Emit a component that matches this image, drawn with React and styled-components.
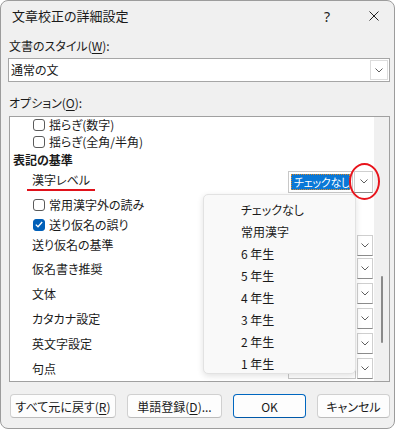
import styled, { createGlobalStyle } from 'styled-components';

const GlobalStyle = createGlobalStyle`
  html, body { margin: 0; padding: 0; background: #ffffff; }
  body {
    font-family: "Noto Sans CJK JP", "Noto Sans", sans-serif;
    font-feature-settings: "palt";
    color: #1a1a1a;
  }
`;

const Dialog = styled.div`
  width: 395px;
  height: 429px;
  box-sizing: border-box;
  border: 1px solid #9c9c9c;
  border-radius: 8px;
  background: #f0f0f0;
  display: flex;
  flex-direction: column;
  overflow: hidden;
`;

const TitleBar = styled.div`
  height: 30px;
  display: flex;
  align-items: center;
  padding-left: 11px;
`;

const Title = styled.div`
  flex: 1;
  font-size: 13px;
  line-height: 30px;
`;

const CaptionButton = styled.div`
  width: ${p => p.w}px;
  height: 30px;
  display: flex;
  align-items: center;
  justify-content: center;
  font-family: "Noto Sans", sans-serif;
  font-size: 14px;
  color: #222;
`;

const Body = styled.div`
  flex: 1;
  display: flex;
  flex-direction: column;
  padding: 0 4px 0 7px;
`;

const FieldLabel = styled.div`
  font-size: 12px;
  line-height: 16px;
  margin-top: ${p => p.mt}px;
  padding-left: 1px;
  u { text-underline-offset: 2px; }
`;

const MainCombo = styled.div`
  margin-top: 4px;
  height: 24px;
  box-sizing: border-box;
  border: 1px solid #a6a6a6;
  background: #fff;
  display: flex;
  align-items: stretch;
`;

const MainComboText = styled.div`
  flex: 1;
  font-size: 12px;
  line-height: 22px;
  padding-left: 2px;
`;

const MainComboButton = styled.div`
  width: 16px;
  margin: 1px;
  border: 1px solid #dcdcdc;
  display: flex;
  align-items: center;
  justify-content: center;
`;

const ListBox = styled.div`
  position: relative;
  margin-top: 5px;
  margin-left: 1px;
  height: 266px;
  box-sizing: border-box;
  border: 1px solid #a0a0a0;
  display: flex;
`;

const ListContent = styled.div`
  flex: 1;
  background: #fff;
  overflow: hidden;
`;

const Row = styled.div`
  height: ${p => p.h}px;
  display: flex;
  align-items: center;
  padding-left: ${p => p.indent}px;
  padding-right: 1px;
  font-size: 12px;
  line-height: 14px;
  font-weight: ${p => (p.bold ? 700 : 400)};
  white-space: nowrap;
`;

const Box = styled.span`
  width: 12px;
  height: 12px;
  box-sizing: border-box;
  border-radius: 3px;
  margin-right: 4px;
  flex: none;
  display: flex;
  align-items: center;
  justify-content: center;
  border: 1px solid ${p => (p.checked ? '#005fb8' : '#5a5a5a')};
  background: ${p => (p.checked ? '#005fb8' : '#fff')};
`;

const Marked = styled.span`
  padding: 0 5px 2px;
  margin-left: -5px;
  border-bottom: 2px solid #e0121b;
`;

const Combo = styled.div`
  margin-left: auto;
  width: 85px;
  height: ${p => p.h || 21}px;
  display: flex;
  align-items: stretch;
  gap: 1px;
`;

const ComboField = styled.div`
  flex: 1;
  box-sizing: border-box;
  border: 1px solid #c8c8c8;
  background: #fff;
  padding: 2px;
  display: flex;
`;

const Highlight = styled.div`
  flex: 1;
  background: #0a78d7;
  outline: 1px dotted #d8882c;
  outline-offset: -1px;
  color: #fff;
  font-size: 11px;
  line-height: 17px;
  padding-left: 3px;
  letter-spacing: -0.3px;
`;

const DropButton = styled.div`
  width: ${p => p.w}px;
  box-sizing: border-box;
  background: #fff;
  border: 1px solid #cfcfcf;
  border-bottom-color: #8c8c8c;
  display: flex;
  align-items: center;
  justify-content: center;
`;

const RedCircle = styled.div`
  position: absolute;
  left: 339px;
  top: 46px;
  width: 31px;
  height: 37px;
  box-sizing: border-box;
  border: 2px solid #e8141c;
  border-radius: 50%;
`;

const ScrollTrack = styled.div`
  width: 15px;
  background: #f0f0f0;
  display: flex;
  justify-content: center;
  padding-top: 159px;
`;

const Thumb = styled.div`
  width: 2px;
  height: 67px;
  border-radius: 1px;
  background: #8a8a8a;
`;

const Popup = styled.div`
  position: absolute;
  left: 193px;
  top: 77px;
  width: 153px;
  height: 180px;
  box-sizing: border-box;
  padding-top: 4px;
  background: #f9f9f9;
  border: 1px solid #e2e2e2;
  border-radius: 5px;
  box-shadow: 0 2px 6px rgba(0, 0, 0, 0.12);
`;

const PopupItem = styled.div`
  height: 22px;
  line-height: 22px;
  padding-left: 37px;
  font-size: 12px;
`;

const ButtonRow = styled.div`
  margin-top: 12px;
  margin-left: 2px;
  display: flex;
  gap: 11px;
`;

const Button = styled.div`
  width: ${p => p.w}px;
  height: 24px;
  box-sizing: border-box;
  border: 1px solid ${p => (p.primary ? '#0067c0' : '#d0d0d0')};
  border-bottom-color: ${p => (p.primary ? '#0058a8' : '#bcbcbc')};
  border-radius: 4px;
  background: #fdfdfd;
  font-size: 12px;
  display: flex;
  align-items: center;
  justify-content: center;
  u { text-underline-offset: 2px; }
`;

const Chevron = () => (
  <svg width="8" height="5" viewBox="0 0 8 5">
    <polyline points="0.5,0.5 4,4 7.5,0.5" fill="none" stroke="#5f5f5f" strokeWidth="1" />
  </svg>
);

const Check = () => (
  <svg width="8" height="7" viewBox="0 0 8 7">
    <polyline points="0.8,3.6 3,5.8 7.2,1" fill="none" stroke="#fff" strokeWidth="1.3" />
  </svg>
);

const CloseIcon = () => (
  <svg width="10" height="10" viewBox="0 0 10 10">
    <path d="M0.5 0.5 L9.5 9.5 M9.5 0.5 L0.5 9.5" stroke="#222" strokeWidth="1" />
  </svg>
);

const levels = ['チェックなし', '常用漢字', '6 年生', '5 年生', '4 年生', '3 年生', '2 年生', '1 年生'];

const comboRows = [
  { label: '送り仮名の基準', h: 22 },
  { label: '仮名書き推奨', h: 25 },
  { label: '文体', h: 25 },
  { label: 'カタカナ設定', h: 25 },
  { label: '英文字設定', h: 25 },
  { label: '句点', h: 25 },
];

function CheckRow({ label, checked, h }) {
  return (
    <Row h={h} indent={23}>
      <Box checked={checked}>{checked && <Check />}</Box>
      {label}
    </Row>
  );
}

export default function App() {
  return (
    <>
      <GlobalStyle />
      <Dialog>
        <TitleBar>
          <Title>文章校正の詳細設定</Title>
          <CaptionButton w={54}>?</CaptionButton>
          <CaptionButton w={40}><CloseIcon /></CaptionButton>
        </TitleBar>
        <Body>
          <FieldLabel mt={7}>文書のスタイル(<u>W</u>):</FieldLabel>
          <MainCombo>
            <MainComboText>通常の文</MainComboText>
            <MainComboButton><Chevron /></MainComboButton>
          </MainCombo>
          <FieldLabel mt={13}>オプション(<u>O</u>):</FieldLabel>
          <ListBox>
            <ListContent>
              <CheckRow h={15} label="揺らぎ(数字)" />
              <CheckRow h={19} label="揺らぎ(全角/半角)" />
              <Row h={18} indent={3} bold>表記の基準</Row>
              <Row h={25} indent={22}>
                <Marked>漢字レベル</Marked>
                <Combo h={22}>
                  <ComboField>
                    <Highlight>チェックなし</Highlight>
                  </ComboField>
                  <DropButton w={19}><Chevron /></DropButton>
                </Combo>
              </Row>
              <CheckRow h={21} label="常用漢字外の読み" />
              <CheckRow h={19} label="送り仮名の誤り" checked />
              {comboRows.map(r => (
                <Row key={r.label} h={r.h} indent={22}>
                  {r.label}
                  <Combo>
                    <ComboField />
                    <DropButton w={16}><Chevron /></DropButton>
                  </Combo>
                </Row>
              ))}
            </ListContent>
            <ScrollTrack>
              <Thumb />
            </ScrollTrack>
            <Popup>
              {levels.map(l => (
                <PopupItem key={l}>{l}</PopupItem>
              ))}
            </Popup>
            <RedCircle />
          </ListBox>
          <ButtonRow>
            <Button w={106}>すべて元に戻す(<u>R</u>)</Button>
            <Button w={95}>単語登録(<u>D</u>)...</Button>
            <Button w={73} primary>OK</Button>
            <Button w={73}>キャンセル</Button>
          </ButtonRow>
        </Body>
      </Dialog>
    </>
  );
}
